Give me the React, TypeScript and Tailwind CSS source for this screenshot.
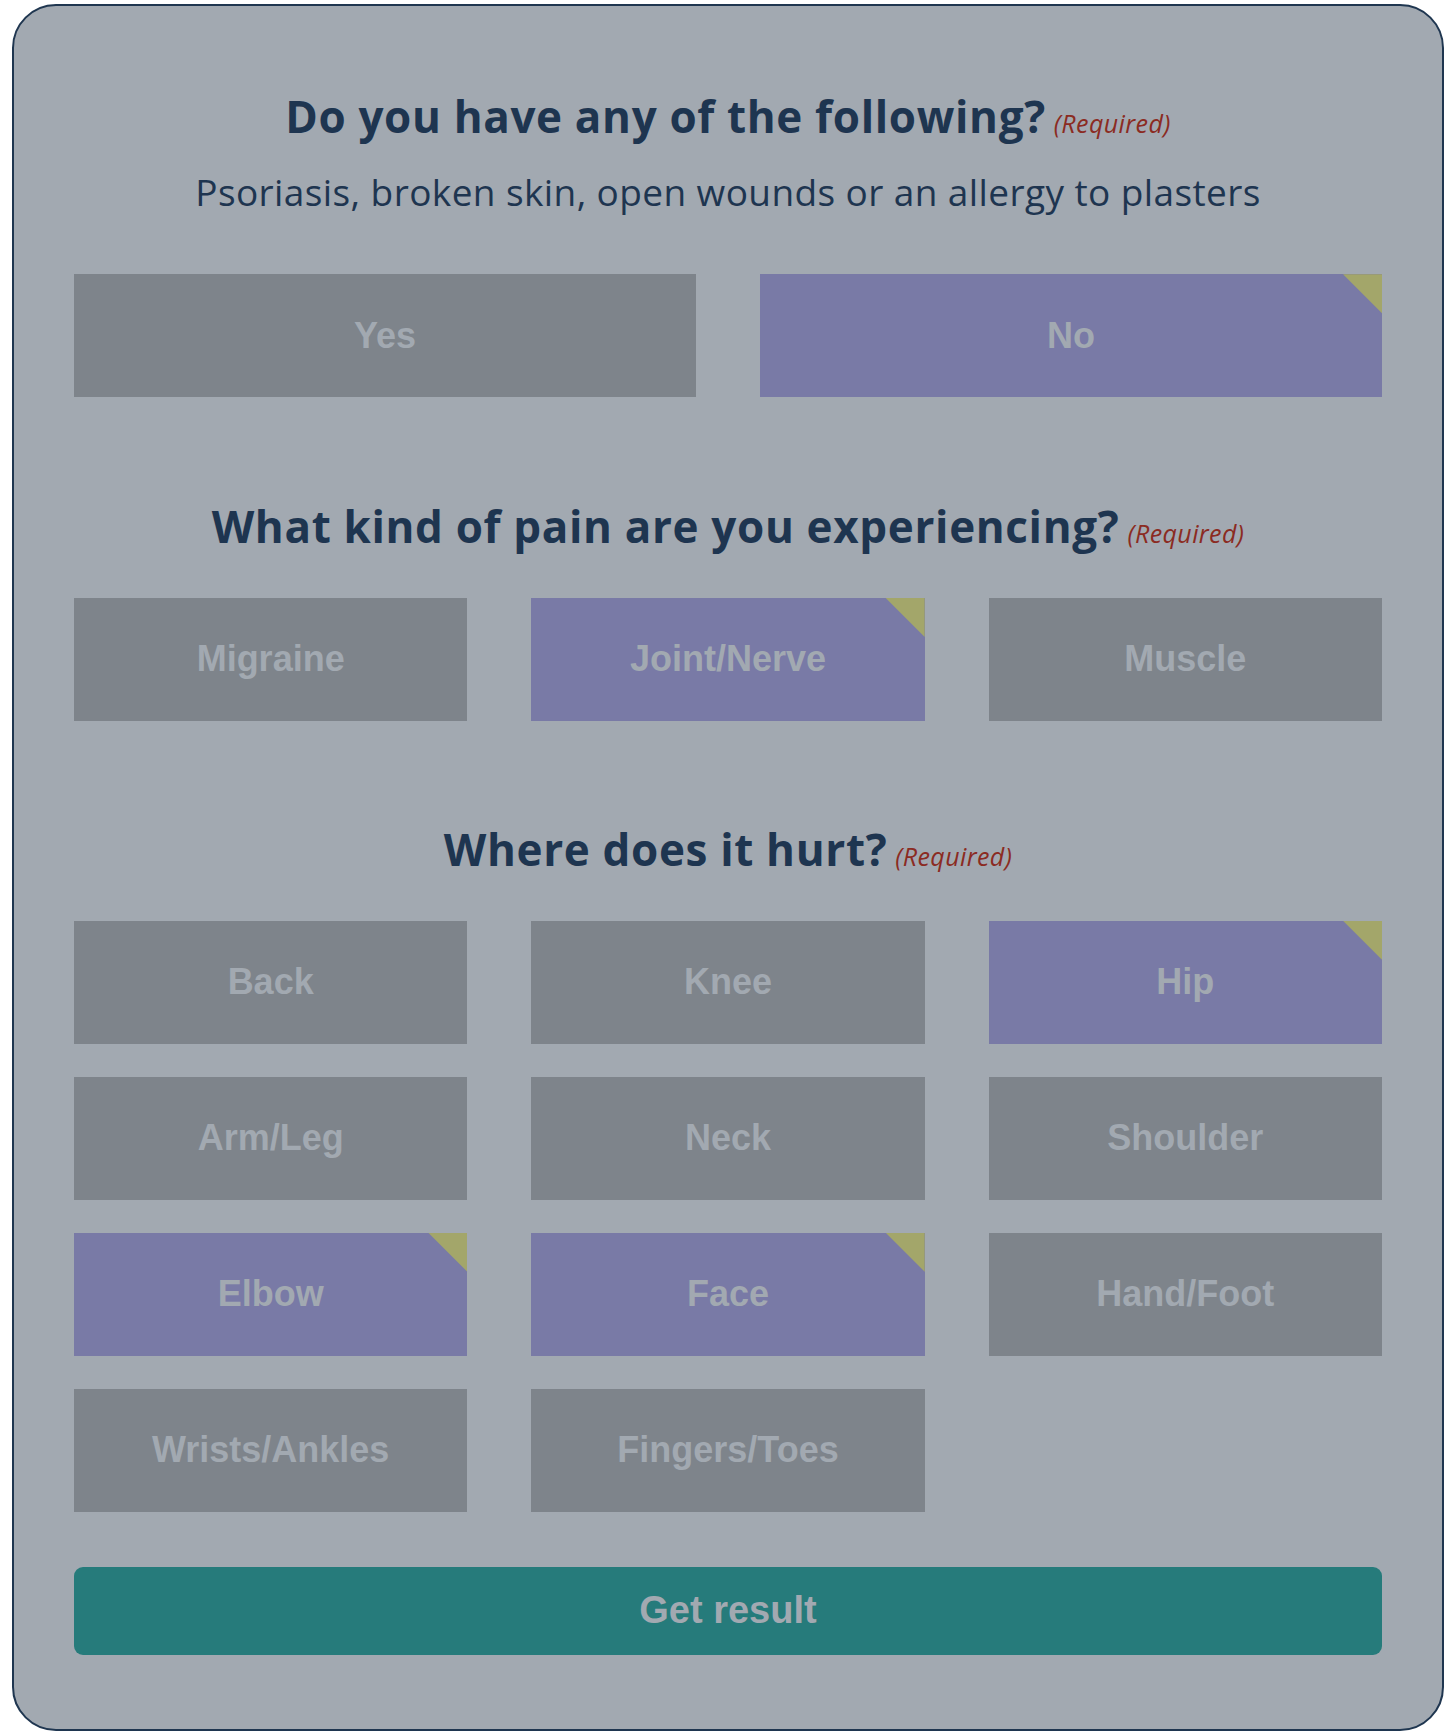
import React, { useState } from 'react';

const headFont = { fontFamily: '"Open Sans", "Noto Sans", sans-serif' };
const btnFont = { fontFamily: '"Liberation Sans", Arial, sans-serif' };

interface ChoiceProps {
  label: string;
  selected: boolean;
  onClick: () => void;
}

const Choice: React.FC<ChoiceProps> = ({ label, selected, onClick }) => (
  <button
    type="button"
    onClick={onClick}
    style={btnFont}
    className={`relative h-[123px] flex items-center justify-center text-[36px] font-bold text-[#a2a9b1] ${
      selected ? 'bg-[#797aa6]' : 'bg-[#7e848b]'
    }`}
  >
    {label}
    {selected && (
      <span className="absolute top-0 right-0 w-[39px] h-[39px] bg-[#a3a66a] [clip-path:polygon(0_0,100%_0,100%_100%)]" />
    )}
  </button>
);

const Heading: React.FC<{ text: string; className?: string }> = ({ text, className }) => (
  <h2
    style={headFont}
    className={`text-center text-[44px] leading-[1.2] font-bold tracking-[0.65px] text-[#1e3550] ${className || ''}`}
  >
    {text}
    <span className="ml-2 text-[25px] font-normal italic tracking-[0.4px] text-[#8b2b22]">(Required)</span>
  </h2>
);

const App: React.FC = () => {
  const [skin, setSkin] = useState('No');
  const [pain, setPain] = useState('Joint/Nerve');
  const [areas, setAreas] = useState<string[]>(['Hip', 'Elbow', 'Face']);

  const toggleArea = (a: string) => {
    setAreas(prev => (prev.includes(a) ? prev.filter(x => x !== a) : [...prev, a]));
  };

  const painTypes = ['Migraine', 'Joint/Nerve', 'Muscle'];
  const places = [
    'Back', 'Knee', 'Hip',
    'Arm/Leg', 'Neck', 'Shoulder',
    'Elbow', 'Face', 'Hand/Foot',
    'Wrists/Ankles', 'Fingers/Toes'
  ];

  return (
    <div className="min-h-screen bg-white pt-[4px] pb-[6px]">
      <div className="ml-[12px] w-[1432px] border-2 border-[#1f3650] rounded-[44px] bg-[#a2a9b1] px-[60px] pt-[84px] pb-[74px]">
        {/* Question 1 */}
        <Heading text="Do you have any of the following?" />
        <p style={headFont} className="mt-[27px] text-center text-[37px] leading-[1.2] tracking-[0.4px] text-[#1e3550]">
          Psoriasis, broken skin, open wounds or an allergy to plasters
        </p>
        <div className="mt-[60px] grid grid-cols-2 gap-x-[64px]">
          {['Yes', 'No'].map(o => (
            <Choice key={o} label={o} selected={skin === o} onClick={() => setSkin(o)} />
          ))}
        </div>

        {/* Question 2 */}
        <Heading text="What kind of pain are you experiencing?" className="mt-[103px]" />
        <div className="mt-[45px] grid grid-cols-3 gap-x-[64px]">
          {painTypes.map(p => (
            <Choice key={p} label={p} selected={pain === p} onClick={() => setPain(p)} />
          ))}
        </div>

        {/* Question 3 */}
        <Heading text="Where does it hurt?" className="mt-[102px]" />
        <div className="mt-[45px] grid grid-cols-3 gap-x-[64px] gap-y-[33px]">
          {places.map(p => (
            <Choice key={p} label={p} selected={areas.includes(p)} onClick={() => toggleArea(p)} />
          ))}
        </div>

        <button
          type="button"
          style={btnFont}
          className="mt-[55px] w-full h-[88px] rounded-[9px] bg-[#267b7b] text-[38px] font-bold text-[#a2a9b1]"
        >
          Get result
        </button>
      </div>
    </div>
  );
};

export default App;
